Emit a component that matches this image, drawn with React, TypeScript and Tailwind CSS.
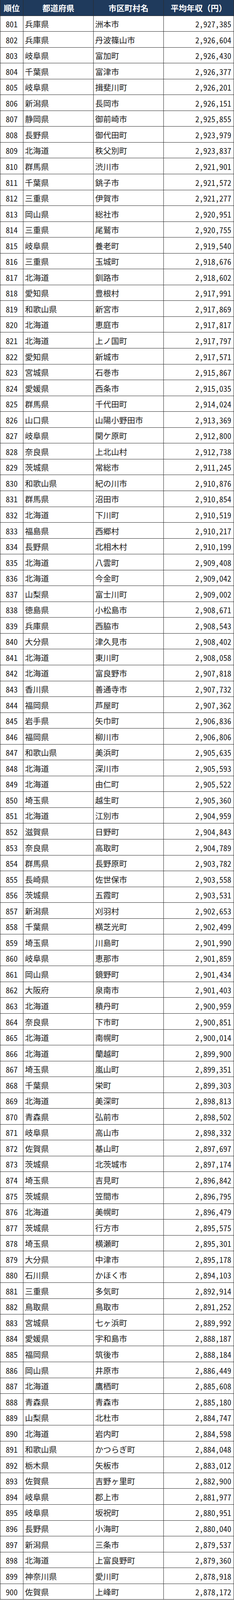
import React from "react";

const rows: [string, string, string][] = [
  ["兵庫県", "洲本市", "2,927,385"],
  ["兵庫県", "丹波篠山市", "2,926,604"],
  ["岐阜県", "富加町", "2,926,430"],
  ["千葉県", "富津市", "2,926,377"],
  ["岐阜県", "揖斐川町", "2,926,201"],
  ["新潟県", "長岡市", "2,926,151"],
  ["静岡県", "御前崎市", "2,925,855"],
  ["長野県", "御代田町", "2,923,979"],
  ["北海道", "秩父別町", "2,923,837"],
  ["群馬県", "渋川市", "2,921,901"],
  ["千葉県", "銚子市", "2,921,572"],
  ["三重県", "伊賀市", "2,921,277"],
  ["岡山県", "総社市", "2,920,951"],
  ["三重県", "尾鷲市", "2,920,755"],
  ["岐阜県", "養老町", "2,919,540"],
  ["三重県", "玉城町", "2,918,676"],
  ["北海道", "釧路市", "2,918,602"],
  ["愛知県", "豊根村", "2,917,991"],
  ["和歌山県", "新宮市", "2,917,869"],
  ["北海道", "恵庭市", "2,917,817"],
  ["北海道", "上ノ国町", "2,917,797"],
  ["愛知県", "新城市", "2,917,571"],
  ["宮城県", "石巻市", "2,915,867"],
  ["愛媛県", "西条市", "2,915,035"],
  ["群馬県", "千代田町", "2,914,024"],
  ["山口県", "山陽小野田市", "2,913,369"],
  ["岐阜県", "関ケ原町", "2,912,800"],
  ["奈良県", "上北山村", "2,912,738"],
  ["茨城県", "常総市", "2,911,245"],
  ["和歌山県", "紀の川市", "2,910,876"],
  ["群馬県", "沼田市", "2,910,854"],
  ["北海道", "下川町", "2,910,519"],
  ["福島県", "西郷村", "2,910,217"],
  ["長野県", "北相木村", "2,910,199"],
  ["北海道", "八雲町", "2,909,408"],
  ["北海道", "今金町", "2,909,042"],
  ["山梨県", "富士川町", "2,909,002"],
  ["徳島県", "小松島市", "2,908,671"],
  ["兵庫県", "西脇市", "2,908,543"],
  ["大分県", "津久見市", "2,908,402"],
  ["北海道", "東川町", "2,908,058"],
  ["北海道", "富良野市", "2,907,818"],
  ["香川県", "善通寺市", "2,907,732"],
  ["福岡県", "芦屋町", "2,907,362"],
  ["岩手県", "矢巾町", "2,906,836"],
  ["福岡県", "柳川市", "2,906,806"],
  ["和歌山県", "美浜町", "2,905,635"],
  ["北海道", "深川市", "2,905,593"],
  ["北海道", "由仁町", "2,905,522"],
  ["埼玉県", "越生町", "2,905,360"],
  ["北海道", "江別市", "2,904,959"],
  ["滋賀県", "日野町", "2,904,843"],
  ["奈良県", "高取町", "2,904,789"],
  ["群馬県", "長野原町", "2,903,782"],
  ["長崎県", "佐世保市", "2,903,558"],
  ["茨城県", "五霞町", "2,903,531"],
  ["新潟県", "刈羽村", "2,902,653"],
  ["千葉県", "横芝光町", "2,902,499"],
  ["埼玉県", "川島町", "2,901,990"],
  ["岐阜県", "恵那市", "2,901,859"],
  ["岡山県", "鏡野町", "2,901,434"],
  ["大阪府", "泉南市", "2,901,403"],
  ["北海道", "積丹町", "2,900,959"],
  ["奈良県", "下市町", "2,900,851"],
  ["北海道", "南幌町", "2,900,014"],
  ["北海道", "蘭越町", "2,899,900"],
  ["埼玉県", "嵐山町", "2,899,351"],
  ["千葉県", "栄町", "2,899,303"],
  ["北海道", "美深町", "2,898,813"],
  ["青森県", "弘前市", "2,898,502"],
  ["岐阜県", "高山市", "2,898,332"],
  ["佐賀県", "基山町", "2,897,697"],
  ["茨城県", "北茨城市", "2,897,174"],
  ["埼玉県", "吉見町", "2,896,842"],
  ["茨城県", "笠間市", "2,896,795"],
  ["北海道", "美幌町", "2,896,479"],
  ["茨城県", "行方市", "2,895,575"],
  ["埼玉県", "横瀬町", "2,895,301"],
  ["大分県", "中津市", "2,895,178"],
  ["石川県", "かほく市", "2,894,103"],
  ["三重県", "多気町", "2,892,914"],
  ["鳥取県", "鳥取市", "2,891,252"],
  ["宮城県", "七ヶ浜町", "2,889,992"],
  ["愛媛県", "宇和島市", "2,888,187"],
  ["福岡県", "筑後市", "2,888,184"],
  ["岡山県", "井原市", "2,886,449"],
  ["北海道", "鷹栖町", "2,885,608"],
  ["青森県", "青森市", "2,885,180"],
  ["山梨県", "北杜市", "2,884,747"],
  ["北海道", "岩内町", "2,884,598"],
  ["和歌山県", "かつらぎ町", "2,884,048"],
  ["栃木県", "矢板市", "2,883,012"],
  ["佐賀県", "吉野ヶ里町", "2,882,900"],
  ["岐阜県", "郡上市", "2,881,977"],
  ["岐阜県", "坂祝町", "2,880,951"],
  ["長野県", "小海町", "2,880,040"],
  ["新潟県", "三条市", "2,879,537"],
  ["北海道", "上富良野町", "2,879,360"],
  ["神奈川県", "愛川町", "2,878,918"],
  ["佐賀県", "上峰町", "2,878,172"],
];

const rowCls = "grid min-h-0 flex-1 basis-0 grid-cols-[60px_180px_180px_180px] overflow-hidden";
const cell = "flex min-h-0 items-center overflow-hidden border-b border-r border-[#2a2a2a]";

export default function App() {
  return (
    <div className="flex h-screen max-h-[4408px] w-[600px] flex-col overflow-hidden bg-white font-['Noto_Sans_CJK_JP',sans-serif] text-[20.5px] leading-none text-[#1a1a1a]">
      <div className={`${rowCls} bg-[#1f3a5c] font-bold text-white`}>
        <div className={`${cell} justify-center border-l`}>順位</div>
        <div className={`${cell} justify-center`}>都道府県</div>
        <div className={`${cell} justify-center`}>市区町村名</div>
        <div className={`${cell} justify-center`}>平均年収（円）</div>
      </div>
      {rows.map(([pref, city, income], i) => (
        <div key={i} className={rowCls}>
          <div className={`${cell} justify-center border-l pt-[2px] [font-feature-settings:'hwid']`}>{801 + i}</div>
          <div className={`${cell} pl-[4px] pt-[2px]`}>{pref}</div>
          <div className={`${cell} pl-[4px] pt-[2px]`}>{city}</div>
          <div className={`${cell} justify-end pr-[6px] pt-[2px] [font-feature-settings:'hwid']`}>{income}</div>
        </div>
      ))}
    </div>
  );
}
